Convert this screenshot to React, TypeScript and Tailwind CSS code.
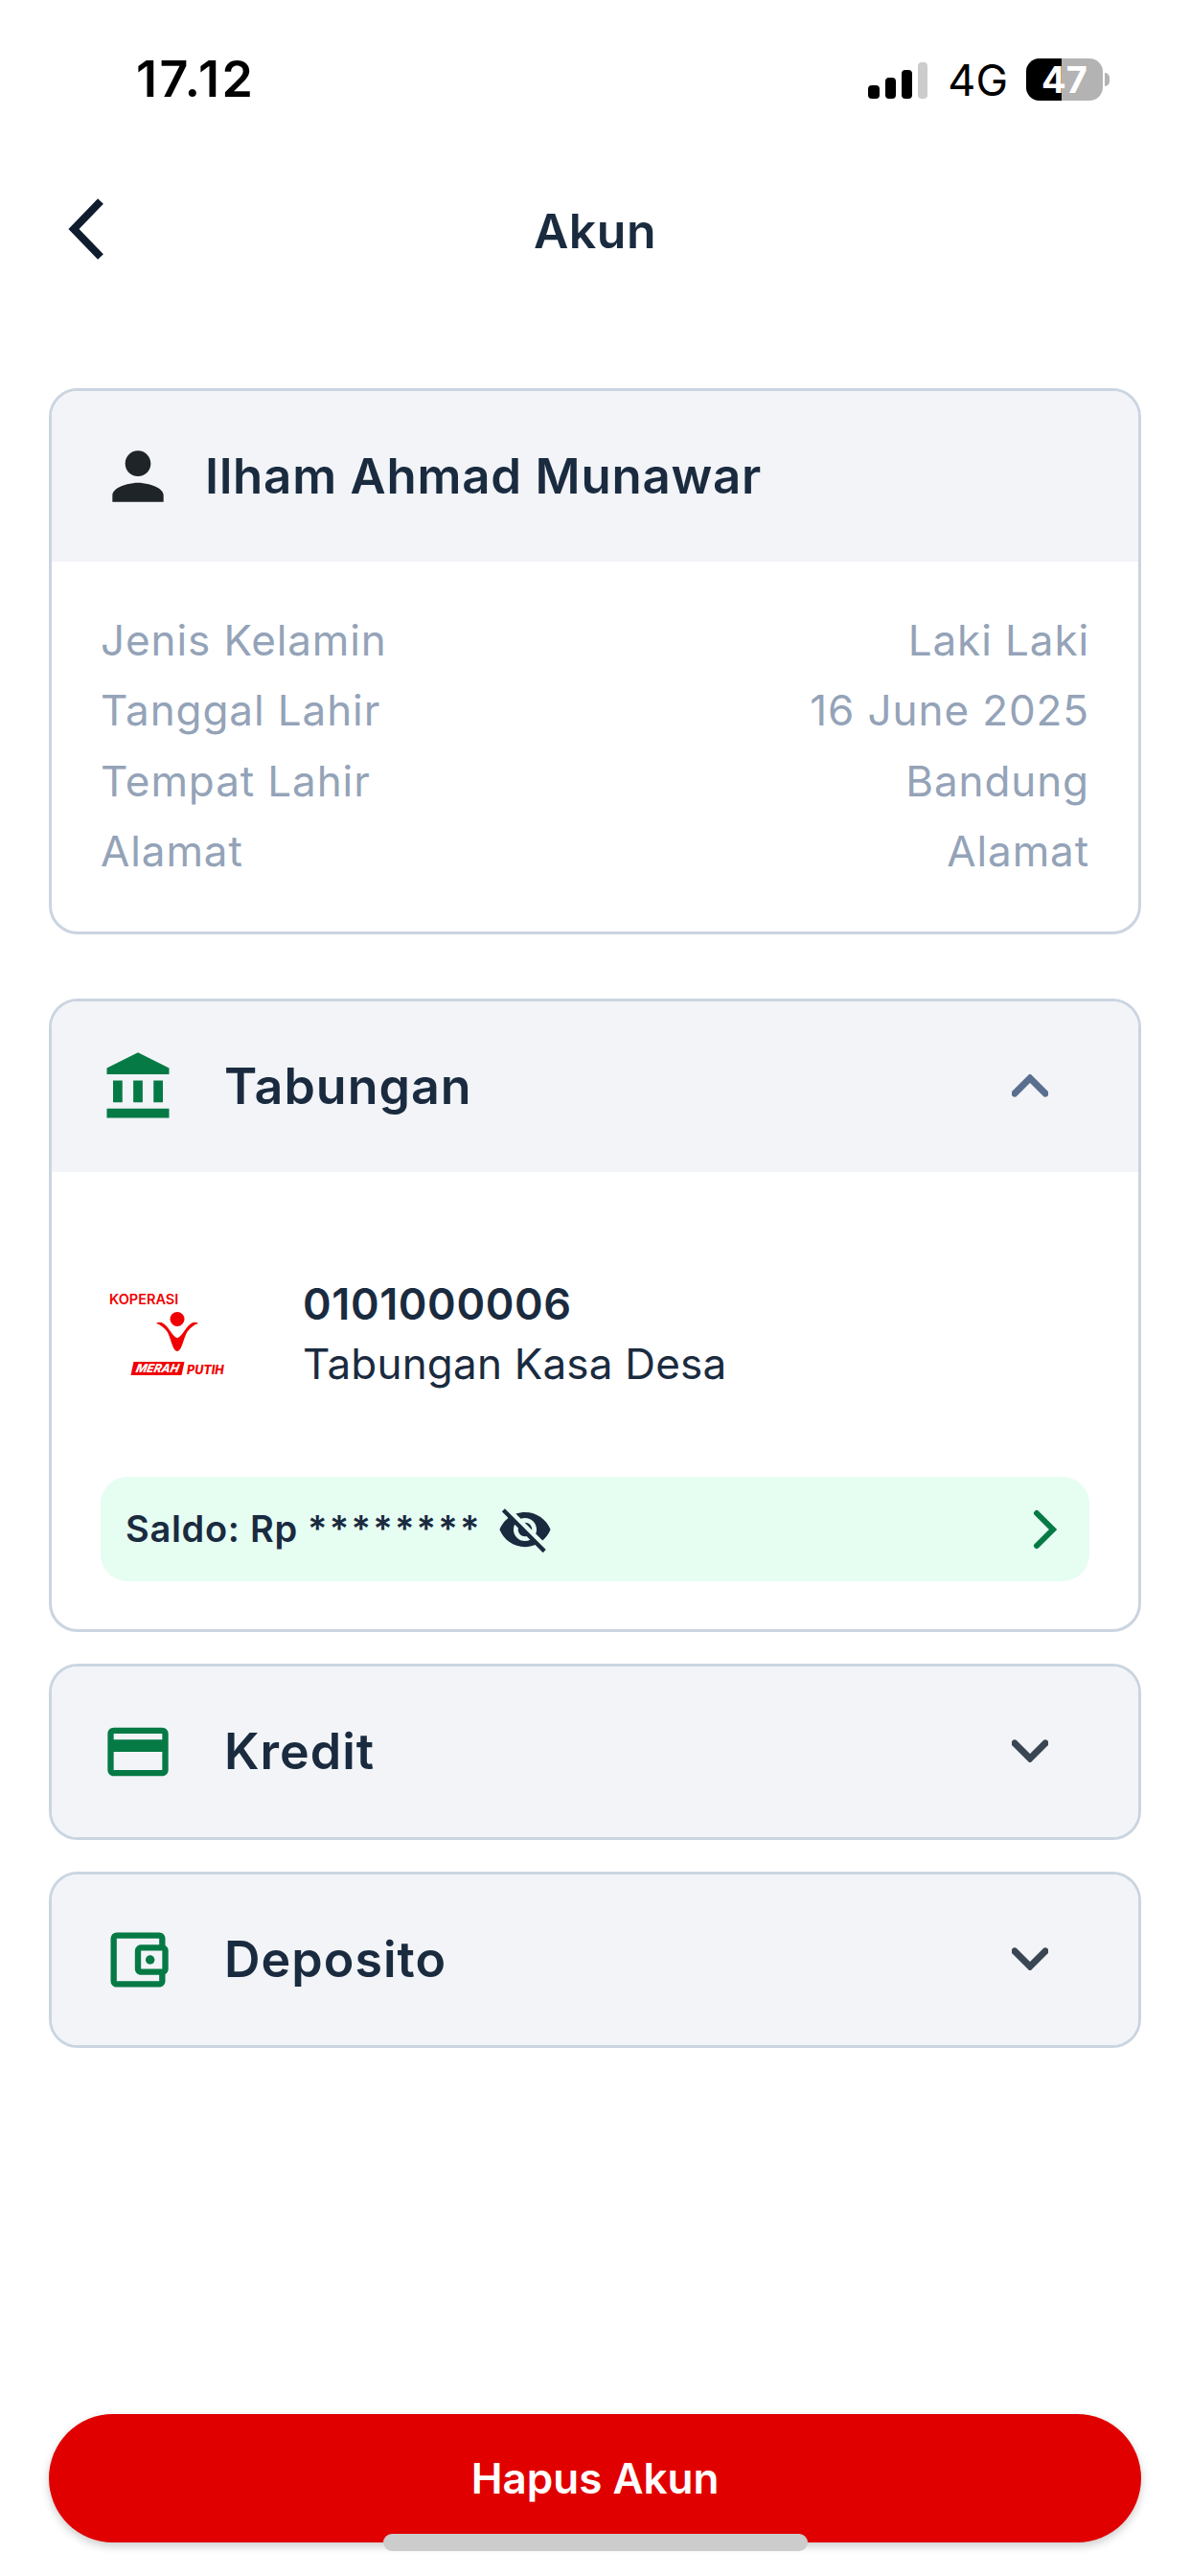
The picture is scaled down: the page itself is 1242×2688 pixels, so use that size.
import { MdAccountBalance, MdOutlineAccountBalanceWallet, MdOutlineCreditCard, MdPerson, MdVisibilityOff } from 'react-icons/md';

const rows = [
  ['Jenis Kelamin', 'Laki Laki'],
  ['Tanggal Lahir', '16 June 2025'],
  ['Tempat Lahir', 'Bandung'],
  ['Alamat', 'Alamat'],
];

function StatusBar() {
  return (
    <div className="flex h-[166px] shrink-0 items-center justify-between pl-[142px] pr-[84px] text-black">
      <span className="text-[52px] font-semibold tracking-[2.5px]">17.12</span>
      <div className="flex items-center">
        <svg width="62" height="38" viewBox="0 0 62 38" className="mt-[2px]">
          <rect x="0" y="24" width="12" height="14" rx="4" fill="#000" />
          <rect x="18" y="16" width="11" height="22" rx="4" fill="#000" />
          <rect x="35" y="8" width="11" height="30" rx="4" fill="#000" />
          <rect x="52" y="0" width="10" height="38" rx="4" fill="#cccccc" />
        </svg>
        <span className="ml-[21px] text-[45px] font-normal leading-none">4G</span>
        <div className="relative ml-[19px] flex h-[44px] w-[80px] overflow-hidden rounded-[14px] bg-[#b3b3b3]">
          <div className="h-full w-[37px] bg-black" />
          <span className="absolute inset-0 flex items-center justify-center text-[38px] font-bold leading-none text-white">47</span>
        </div>
        <div className="ml-[2px] h-[14px] w-[5px] rounded-r-full bg-[#b3b3b3]" />
      </div>
    </div>
  );
}

function Section({ icon, title, open }: { icon: React.ReactNode; title: string; open?: boolean }) {
  return (
    <div className="flex h-[178px] items-center bg-[#f2f4f8] pl-[48px] pr-[94px]">
      <div className="flex w-[84px] shrink-0 justify-center text-[#057a45]">{icon}</div>
      <span className="ml-[48px] flex-1 text-[52px] font-semibold tracking-[1px] text-[#1a2b3f]">{title}</span>
      <svg width="38" height="24" viewBox="0 0 38 24" className="-mt-[2px]">
        <path
          d={open ? 'M3 20 L19 4 L35 20' : 'M3 4 L19 20 L35 4'}
          fill="none"
          stroke={open ? '#5a6f8f' : '#3a4654'}
          strokeWidth="7"
          strokeLinecap="round"
        />
      </svg>
    </div>
  );
}

function Logo() {
  return (
    <div className="flex w-[122px] shrink-0 flex-col text-[#f00000]">
      <span className="text-[14.5px] font-semibold leading-[12px]">KOPERASI</span>
      <svg width="44" height="41" viewBox="0 0 44 41" className="ml-[49px] mt-[7px]">
        <circle cx="22" cy="7.5" r="7.5" fill="#f00000" />
        <path d="M0 12 C4 9 8 12 11 15 C15 20 19 27 22 27 C25 27 29 20 33 15 C36 12 40 9 44 12 C40 13 36 16 33 20 C29 25 27 41 22 41 C17 41 15 25 11 20 C8 16 4 13 0 12 Z" fill="#f00000" />
      </svg>
      <div className="ml-[24px] mt-[11px] flex items-end">
        <span className="w-[53px] -skew-x-12 bg-[#f00000] text-center text-[12px] font-extrabold italic leading-[14px] text-white">MERAH</span>
        <span className="ml-[4px] text-[12.5px] font-extrabold italic leading-[11px]">PUTIH</span>
      </div>
    </div>
  );
}

export default function App() {
  return (
    <div className="relative flex h-[2688px] w-[1242px] flex-col overflow-hidden bg-white font-['Inter',sans-serif]">
      <StatusBar />

      <div className="relative flex h-[150px] shrink-0 items-center justify-center">
        <svg width="38" height="64" viewBox="0 0 38 64" className="absolute left-[71px] top-[41px]">
          <path d="M34 3 L6 32 L34 61" fill="none" stroke="#0f1c2e" strokeWidth="8" />
        </svg>
        <span className="text-[50px] font-semibold tracking-[0.5px] text-[#1a2b3f]">Akun</span>
      </div>

      <div className="mt-[89px] flex flex-1 flex-col px-[51px]">
        <div className="overflow-hidden rounded-[30px] border-[3px] border-[#cbd5e1]">
          <div className="flex h-[178px] items-center bg-[#f2f4f8] pl-[50px]">
            <MdPerson size={80} className="text-[#1f2429]" />
            <span className="ml-[30px] text-[51px] font-semibold tracking-[0.8px] text-[#1a2b3f]">Ilham Ahmad Munawar</span>
          </div>
          <div className="flex flex-col px-[51px] pb-[47px] pt-[46px] text-[44px] leading-[73.3px] tracking-[0.9px] text-[#94a3b8]">
            {rows.map(([label, value]) => (
              <div key={label} className="flex justify-between">
                <span>{label}</span>
                <span>{value}</span>
              </div>
            ))}
          </div>
        </div>

        <div className="mt-[67px] overflow-hidden rounded-[30px] border-[3px] border-[#cbd5e1]">
          <Section icon={<MdAccountBalance size={78} />} title="Tabungan" open />
          <div className="px-[51px] pb-[50px] pt-[106px]">
            <div className="flex items-center pl-[9px]">
              <Logo />
              <div className="ml-[80px] flex flex-col">
                <span className="text-[45px] font-semibold leading-[63px] tracking-[0.6px] text-[#1a2b3f]">0101000006</span>
                <span className="text-[44px] leading-[63px] tracking-[0.2px] text-[#1a2b3f]">Tabungan Kasa Desa</span>
              </div>
            </div>
            <div className="mt-[86px] flex h-[109px] items-center rounded-[28px] bg-[#e6fdf2] pl-[26px] pr-[33px]">
              <span className="text-[38px] font-semibold tracking-[0.7px] text-[#1a2b3f]">
                Saldo: Rp <span className="tracking-[2.2px]">********</span>
              </span>
              <MdVisibilityOff size={58} className="ml-[16px] text-[#1a2b3f]" />
              <svg width="26" height="42" viewBox="0 0 26 42" className="ml-auto">
                <path d="M4 4 L21 21 L4 38" fill="none" stroke="#057a45" strokeWidth="6" strokeLinecap="round" />
              </svg>
            </div>
          </div>
        </div>

        <div className="mt-[33px] overflow-hidden rounded-[30px] border-[3px] border-[#cbd5e1]">
          <Section icon={<MdOutlineCreditCard size={76} />} title="Kredit" />
        </div>
        <div className="mt-[33px] overflow-hidden rounded-[30px] border-[3px] border-[#cbd5e1]">
          <Section icon={<MdOutlineAccountBalanceWallet size={76} />} title="Deposito" />
        </div>

        <button type="button" className="mb-[35px] mt-auto flex h-[134px] items-center justify-center rounded-full bg-[#e00000] text-[44px] font-semibold text-white shadow-[0_4px_10px_rgba(0,0,0,0.2)]">
          Hapus Akun
        </button>
      </div>

      <div className="absolute left-[400px] top-[2644px] h-[18px] w-[443px] rounded-full bg-[#cccccc]" />
    </div>
  );
}
